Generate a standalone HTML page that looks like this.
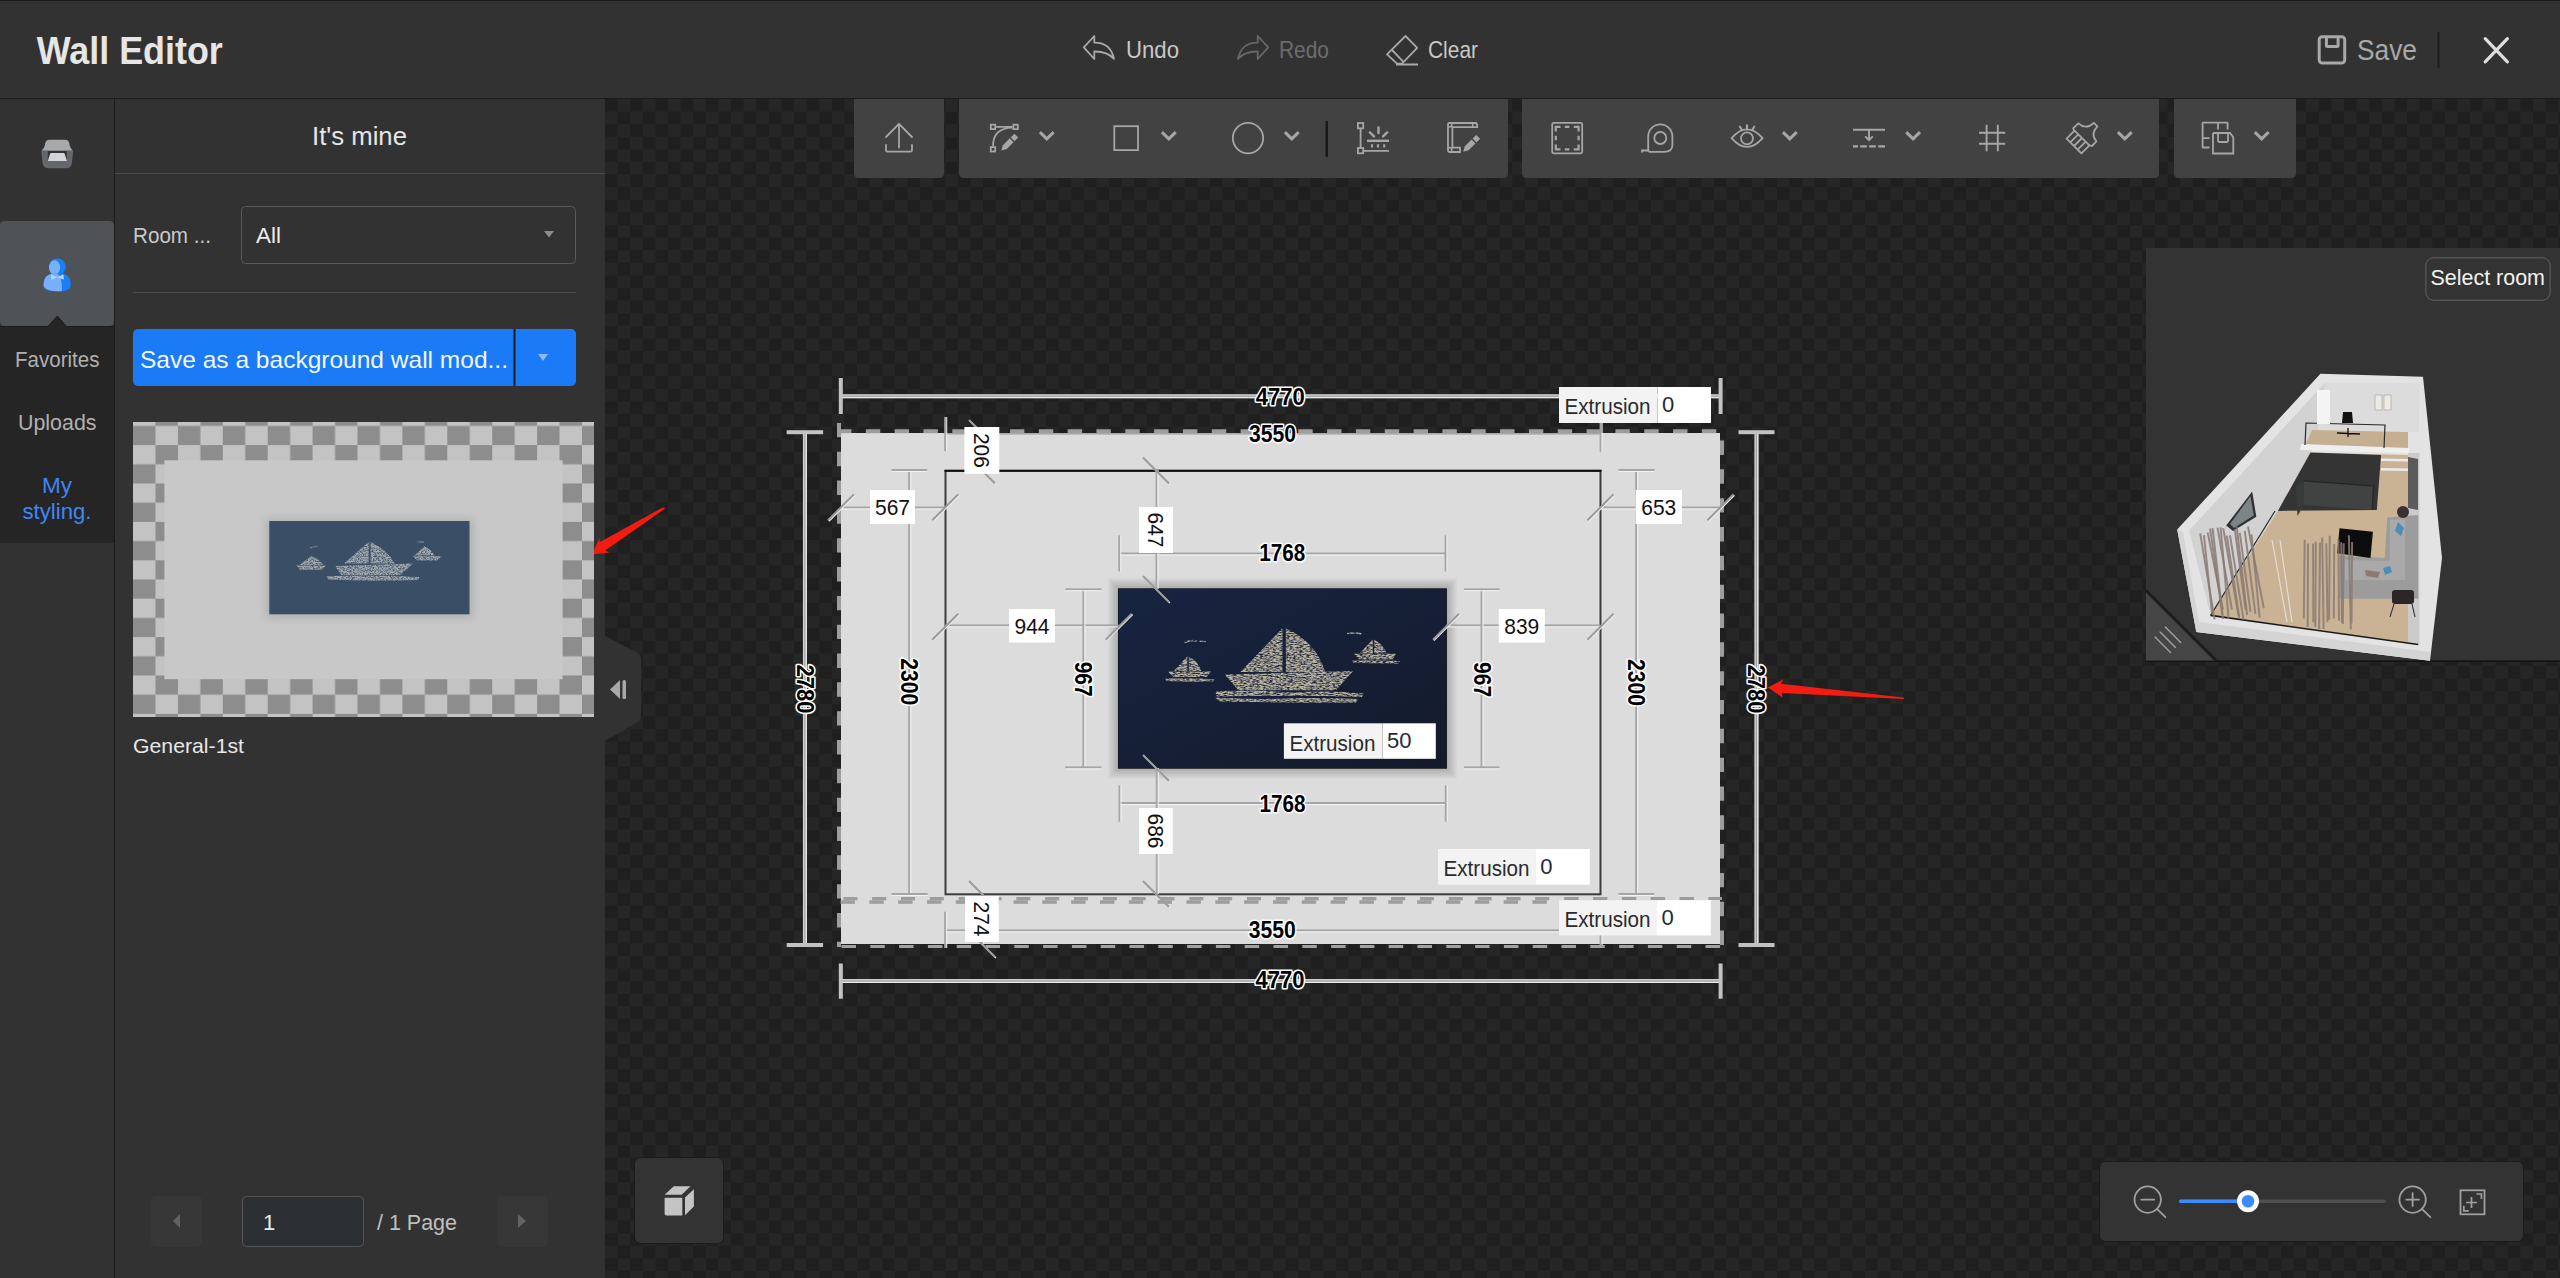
<!DOCTYPE html>
<html><head><meta charset="utf-8">
<style>
html,body{margin:0;padding:0;width:2560px;height:1278px;overflow:hidden;background:#323232;}
body{font-family:"Liberation Sans",sans-serif;position:relative;}
.abs{position:absolute;}
svg text{font-family:"Liberation Sans",sans-serif;}
</style></head>
<body>
<!-- canvas checker -->
<div class="abs" style="left:605px;top:99px;width:1955px;height:1179px;background-color:#1f1f1f;background-image:conic-gradient(#262626 0 25%,#1f1f1f 0 50%,#262626 0 75%,#1f1f1f 0);background-size:25.21px 25.21px;"></div>

<svg class="abs" style="left:0;top:0" width="2560" height="1278" viewBox="0 0 2560 1278">
<defs>
  <filter id="shadow" x="-20%" y="-30%" width="140%" height="160%">
    <feGaussianBlur stdDeviation="7"/>
  </filter>
  <filter id="shadow2" x="-20%" y="-30%" width="140%" height="160%">
    <feGaussianBlur stdDeviation="2.5"/>
  </filter>
  <filter id="chalk" filterUnits="userSpaceOnUse" x="1150" y="620" width="260" height="90">
    <feTurbulence type="fractalNoise" baseFrequency="0.3 1.1" numOctaves="2" seed="7" result="noise"/>
    <feColorMatrix in="noise" type="matrix" values="0 0 0 0 0  0 0 0 0 0  0 0 0 0 0  0 0 0 2.4 -0.55" result="mask"/>
    <feComposite in="SourceGraphic" in2="mask" operator="in" result="c"/>
    <feGaussianBlur in="c" stdDeviation="0.45"/>
  </filter>
  <linearGradient id="paint" x1="0" y1="0" x2="1" y2="1">
    <stop offset="0" stop-color="#172441"/>
    <stop offset="1" stop-color="#141a2b"/>
  </linearGradient>
</defs>

<!-- ===== HEADER ===== -->
<rect x="0" y="0" width="2560" height="98" fill="#323232"/>
<rect x="0" y="0" width="2560" height="1" fill="#191919"/>
<rect x="0" y="98" width="2560" height="1" fill="#1c1c1c"/>
<text x="36.8" y="64" font-size="38" font-weight="bold" fill="#e6e6e6" textLength="186" lengthAdjust="spacingAndGlyphs">Wall Editor</text>

<g id="hdr-actions">
  <text x="1126" y="58" font-size="24" fill="#c8c8c8" textLength="53" lengthAdjust="spacingAndGlyphs">Undo</text>
  <text x="1279" y="58" font-size="24" fill="#6c6c6c" textLength="50" lengthAdjust="spacingAndGlyphs">Redo</text>
  <text x="1428" y="58" font-size="24" fill="#c8c8c8" textLength="50" lengthAdjust="spacingAndGlyphs">Clear</text>
  <text x="2357" y="60" font-size="29" fill="#a8a8a8" textLength="60" lengthAdjust="spacingAndGlyphs">Save</text>
  <rect x="2437.5" y="32" width="2" height="36" fill="#1e1e1e"/>
</g>

<!-- ===== LEFT RAIL ===== -->
<rect x="114" y="99" width="1" height="1179" fill="#1c1c1c"/>
<rect x="0" y="327" width="114" height="216" fill="#252525"/>
<path d="M0 226 Q0 221 5 221 L109 221 Q114 221 114 226 L114 321 Q114 326 109 326 L66.5 326 L57.3 316 L48 326 L5 326 Q0 326 0 321 Z" fill="#4f5357"/>
<rect x="0" y="326" width="48" height="1" fill="#1c1c1c"/>
<rect x="66.5" y="326" width="47.5" height="1" fill="#1c1c1c"/>
<path d="M48 327 L57.3 316 L66.5 327 Z" fill="#252525"/>
<path d="M48 326.5 L57.3 316 L66.5 326.5" fill="none" stroke="#1c1c1c" stroke-width="1"/>

<text x="15" y="367" font-size="22" fill="#b0b0b0" textLength="84.5" lengthAdjust="spacingAndGlyphs">Favorites</text>
<text x="18" y="430" font-size="22" fill="#b0b0b0" textLength="78.5" lengthAdjust="spacingAndGlyphs">Uploads</text>
<text x="42" y="493" font-size="22" fill="#3f86f7" textLength="30" lengthAdjust="spacingAndGlyphs">My</text>
<text x="22.5" y="519" font-size="22" fill="#3f86f7" textLength="69" lengthAdjust="spacingAndGlyphs">styling.</text>

<!-- ===== PANEL ===== -->
<text x="312" y="145" font-size="26" fill="#e6e6e6" textLength="95" lengthAdjust="spacingAndGlyphs">It's mine</text>
<rect x="115" y="173" width="490" height="1" fill="#4a4a4a"/>
<text x="133" y="243" font-size="22" fill="#c8c8c8" textLength="78" lengthAdjust="spacingAndGlyphs">Room ...</text>
<rect x="241.5" y="206.5" width="334" height="57" rx="4" fill="none" stroke="#595959" stroke-width="1"/>
<text x="256" y="243" font-size="22" fill="#ececec" textLength="25" lengthAdjust="spacingAndGlyphs">All</text>
<path d="M544 231 L554 231 L549 237.5 Z" fill="#8c8c8c"/>
<rect x="133" y="292" width="443" height="1" fill="#4a4a4a"/>
<rect x="133" y="329" width="443" height="57" rx="5" fill="#1b7af6"/>
<rect x="513.5" y="329" width="2" height="57" fill="#1a1d22"/>
<text x="140" y="368" font-size="24" fill="#f2f6ff" textLength="368" lengthAdjust="spacingAndGlyphs">Save as a background wall mod...</text>
<path d="M538 354 L548 354 L543 361 Z" fill="#8fbaff"/>

<text x="133" y="753" font-size="21" fill="#e8e8e8" textLength="111" lengthAdjust="spacingAndGlyphs">General-1st</text>

<!-- pagination -->
<rect x="151" y="1196" width="51" height="51" rx="5" fill="#373737"/>
<path d="M180 1214 L180 1228 L173 1221 Z" fill="#626262"/>
<rect x="242.5" y="1196.5" width="121" height="50" rx="4" fill="#2c2f33" stroke="#575757" stroke-width="1"/>
<text x="263" y="1230" font-size="22" fill="#e8e8e8">1</text>
<text x="377" y="1230" font-size="22" fill="#c0c0c0" textLength="80" lengthAdjust="spacingAndGlyphs">/ 1 Page</text>
<rect x="497" y="1196" width="51" height="51" rx="5" fill="#373737"/>
<path d="M518 1214 L518 1228 L526 1221 Z" fill="#626262"/>

<!-- collapse tab -->
<path d="M605 636 L638 653 Q641 655 641 658 L641 717 Q641 720 638 722 L605 741 Z" fill="#323232"/>
<path d="M620 680 L620 699 L610 689.5 Z" fill="#a8a8a8"/>
<rect x="622.5" y="680" width="3.5" height="19" rx="1.5" fill="#a8a8a8"/>

<!-- ===== TOOLBAR GROUPS ===== -->
<path d="M854 99 L944 99 L944 173 Q944 178 939 178 L859 178 Q854 178 854 173 Z" fill="#424242"/>
<path d="M959 99 L1508 99 L1508 173 Q1508 178 1503 178 L964 178 Q959 178 959 173 Z" fill="#424242"/>
<path d="M1522 99 L2159 99 L2159 173 Q2159 178 2154 178 L1527 178 Q1522 178 1522 173 Z" fill="#424242"/>
<path d="M2174 99 L2296 99 L2296 173 Q2296 178 2291 178 L2179 178 Q2174 178 2174 173 Z" fill="#424242"/>
<rect x="1325.5" y="121" width="2.5" height="36" fill="#1a1a1a"/>

<!-- bottom-left 3D button -->
<rect x="634.5" y="1157.5" width="89" height="86" rx="6" fill="#333333" stroke="#1b1b1b" stroke-width="1"/>
<!-- zoom panel -->
<rect x="2099.5" y="1161.5" width="424" height="80" rx="6" fill="#333333" stroke="#1b1b1b" stroke-width="1"/>
<rect x="2179" y="1199.5" width="207" height="3.5" rx="1.7" fill="#4f4f4f"/>
<rect x="2179" y="1199.5" width="69" height="3.5" rx="1.7" fill="#3a8bff"/>
<circle cx="2248" cy="1201.3" r="11" fill="#ffffff"/>
<circle cx="2248" cy="1201.3" r="6.3" fill="#3a8bff"/>


<!-- drawing.svg -->
<rect x="841" y="433" width="879" height="511" fill="#dcdcdc"/>
<path d="M837 431.2 L1722 431.2" stroke-width="4" stroke="#9d9d9d" stroke-dasharray="14.4 14.43" fill="none"/>
<path d="M839 422.9 L839 947" stroke-width="4" stroke="#9d9d9d" stroke-dasharray="14.4 14.43" fill="none"/>
<path d="M1722 440.5 L1722 947" stroke-width="4" stroke="#9d9d9d" stroke-dasharray="14.4 14.43" fill="none"/>
<path d="M841.5 946.5 L1722 946.5" stroke-width="3" stroke="#a2a2a2" stroke-dasharray="14.5 14.3" fill="none"/>
<path d="M1564.2 898.5 L1722 898.5" stroke-width="3.2" stroke="#9d9d9d" stroke-dasharray="14.4 14.43" fill="none"/>
<rect x="1506.4" y="897" width="14.1" height="3.3" fill="#9d9d9d"/><rect x="1503.6" y="900.3" width="14.4" height="3.5" fill="#9d9d9d"/>
<rect x="1477.57" y="897" width="14.1" height="3.3" fill="#9d9d9d"/><rect x="1474.77" y="900.3" width="14.4" height="3.5" fill="#9d9d9d"/>
<rect x="1448.74" y="897" width="14.1" height="3.3" fill="#9d9d9d"/><rect x="1445.94" y="900.3" width="14.4" height="3.5" fill="#9d9d9d"/>
<rect x="1419.91" y="897" width="14.1" height="3.3" fill="#9d9d9d"/><rect x="1417.11" y="900.3" width="14.4" height="3.5" fill="#9d9d9d"/>
<rect x="1391.08" y="897" width="14.1" height="3.3" fill="#9d9d9d"/><rect x="1388.28" y="900.3" width="14.4" height="3.5" fill="#9d9d9d"/>
<rect x="1362.25" y="897" width="14.1" height="3.3" fill="#9d9d9d"/><rect x="1359.45" y="900.3" width="14.4" height="3.5" fill="#9d9d9d"/>
<rect x="1333.42" y="897" width="14.1" height="3.3" fill="#9d9d9d"/><rect x="1330.62" y="900.3" width="14.4" height="3.5" fill="#9d9d9d"/>
<rect x="1304.59" y="897" width="14.1" height="3.3" fill="#9d9d9d"/><rect x="1301.79" y="900.3" width="14.4" height="3.5" fill="#9d9d9d"/>
<rect x="1275.76" y="897" width="14.1" height="3.3" fill="#9d9d9d"/><rect x="1272.96" y="900.3" width="14.4" height="3.5" fill="#9d9d9d"/>
<rect x="1246.93" y="897" width="14.1" height="3.3" fill="#9d9d9d"/><rect x="1244.13" y="900.3" width="14.4" height="3.5" fill="#9d9d9d"/>
<rect x="1218.1" y="897" width="14.1" height="3.3" fill="#9d9d9d"/><rect x="1215.3" y="900.3" width="14.4" height="3.5" fill="#9d9d9d"/>
<rect x="1189.27" y="897" width="14.1" height="3.3" fill="#9d9d9d"/><rect x="1186.47" y="900.3" width="14.4" height="3.5" fill="#9d9d9d"/>
<rect x="1160.44" y="897" width="14.1" height="3.3" fill="#9d9d9d"/><rect x="1157.64" y="900.3" width="14.4" height="3.5" fill="#9d9d9d"/>
<rect x="1131.61" y="897" width="14.1" height="3.3" fill="#9d9d9d"/><rect x="1128.81" y="900.3" width="14.4" height="3.5" fill="#9d9d9d"/>
<rect x="1102.78" y="897" width="14.1" height="3.3" fill="#9d9d9d"/><rect x="1099.98" y="900.3" width="14.4" height="3.5" fill="#9d9d9d"/>
<rect x="1073.95" y="897" width="14.1" height="3.3" fill="#9d9d9d"/><rect x="1071.15" y="900.3" width="14.4" height="3.5" fill="#9d9d9d"/>
<rect x="1045.12" y="897" width="14.1" height="3.3" fill="#9d9d9d"/><rect x="1042.32" y="900.3" width="14.4" height="3.5" fill="#9d9d9d"/>
<rect x="1016.29" y="897" width="14.1" height="3.3" fill="#9d9d9d"/><rect x="1013.49" y="900.3" width="14.4" height="3.5" fill="#9d9d9d"/>
<rect x="987.46" y="897" width="14.1" height="3.3" fill="#9d9d9d"/><rect x="984.66" y="900.3" width="14.4" height="3.5" fill="#9d9d9d"/>
<rect x="958.63" y="897" width="14.1" height="3.3" fill="#9d9d9d"/><rect x="955.83" y="900.3" width="14.4" height="3.5" fill="#9d9d9d"/>
<rect x="929.8" y="897" width="14.1" height="3.3" fill="#9d9d9d"/><rect x="927" y="900.3" width="14.4" height="3.5" fill="#9d9d9d"/>
<rect x="900.97" y="897" width="14.1" height="3.3" fill="#9d9d9d"/><rect x="898.17" y="900.3" width="14.4" height="3.5" fill="#9d9d9d"/>
<rect x="872.14" y="897" width="14.1" height="3.3" fill="#9d9d9d"/><rect x="869.34" y="900.3" width="14.4" height="3.5" fill="#9d9d9d"/>
<rect x="843.31" y="897" width="14.1" height="3.3" fill="#9d9d9d"/><rect x="840.51" y="900.3" width="14.4" height="3.5" fill="#9d9d9d"/>
<rect x="1535.2" y="897" width="14.1" height="3.3" fill="#9d9d9d"/><rect x="1532.4" y="900.3" width="14.4" height="3.5" fill="#9d9d9d"/>
<rect x="945.5" y="470.8" width="655" height="423.5" fill="none" stroke="#3c3c3c" stroke-width="2"/>
<rect x="944.5" y="469.8" width="657" height="2" fill="#111"/>
<defs><linearGradient id="shT" x1="0" y1="1" x2="0" y2="0"><stop offset="0" stop-color="#a9a9a9"/><stop offset="1" stop-color="#dcdcdc"/></linearGradient><linearGradient id="shB" x1="0" y1="0" x2="0" y2="1"><stop offset="0" stop-color="#a9a9a9"/><stop offset="1" stop-color="#dcdcdc"/></linearGradient><linearGradient id="shL" x1="1" y1="0" x2="0" y2="0"><stop offset="0" stop-color="#a9a9a9"/><stop offset="1" stop-color="#dcdcdc"/></linearGradient><linearGradient id="shR" x1="0" y1="0" x2="1" y2="0"><stop offset="0" stop-color="#a9a9a9"/><stop offset="1" stop-color="#dcdcdc"/></linearGradient></defs>
<path d="M1107.2 577.5 L1457.7 577.5 L1446.2 589 L1118.7 589 Z" fill="url(#shT)"/>
<path d="M1107.2 779.5 L1457.7 779.5 L1446.2 768 L1118.7 768 Z" fill="url(#shB)"/>
<path d="M1107.2 577.5 L1118.7 589 L1118.7 768 L1107.2 779.5 Z" fill="url(#shL)"/>
<path d="M1457.7 577.5 L1446.2 589 L1446.2 768 L1457.7 779.5 Z" fill="url(#shR)"/>
<rect x="1118" y="588.3" width="328.9" height="180.4" fill="#0c0f16"/>
<rect x="1118.7" y="589" width="327.5" height="179" fill="url(#paint)"/>
<g fill="#bcb5a2" filter="url(#chalk)">
<path d="M1282.5 628.3 L1240.4 672 L1282.5 672 Z"/>
<path d="M1285.8 628.3 Q1316 642 1325.2 672 L1285.8 672 Z"/>
<path d="M1224.6 674.5 L1353.1 671 L1335.9 690.2 L1238.4 690.2 Z"/>
<path d="M1215 691.5 Q1250 689 1290 692.5 Q1330 690 1363.3 693.5 L1362 697 Q1300 695 1217 696.5 Z"/>
<path d="M1215 697.5 Q1260 700 1300 698 Q1340 697.5 1358 699 L1356 702.5 Q1290 703 1220 701.5 Z"/>
<path d="M1187.3 656.2 L1173.9 670.9 L1187.3 670.9 Z"/>
<path d="M1188.8 656.5 Q1198 661 1201.3 670.9 L1188.8 670.9 Z"/>
<path d="M1167.8 671.6 L1211 671.6 L1206.4 677 L1173.4 677 Z"/>
<path d="M1165.2 678.6 Q1190 677.8 1214.5 679.2 L1213 681.6 Q1190 682 1166 681 Z"/>
<path d="M1372.8 639.5 L1359.7 653.2 L1372.8 653.2 Z"/>
<path d="M1374.2 639.8 Q1383 644 1386.6 653.2 L1374.2 653.2 Z"/>
<path d="M1354.1 653.8 L1395.8 653.8 L1392.7 659.6 L1359.2 659.6 Z"/>
<path d="M1352.1 660.4 Q1376 659.8 1399.8 661 L1398.5 663.4 Q1376 663.6 1353 662.8 Z"/>
<path d="M1184.5 642.5 Q1192 639.5 1197 641 M1199.5 641.3 L1205.9 641.8" stroke="#bcb5a2" stroke-width="1.4" fill="none"/>
<path d="M1347 633.6 Q1354 632.4 1361.3 633.8" stroke="#bcb5a2" stroke-width="1.5" fill="none"/>
</g>
<rect x="840.8" y="394.2" width="879.8" height="4" fill="#cdcdcd"/>
<rect x="840.8" y="395.7" width="879.8" height="1" fill="#9c9c9c"/>
<rect x="840.8" y="397.2" width="879.8" height="1" fill="#ececec"/>
<rect x="838.8" y="378" width="4" height="36" fill="#c2c2c2"/>
<rect x="1718.6" y="378" width="4" height="36" fill="#c2c2c2"/>
<rect x="840.8" y="979" width="879.8" height="4" fill="#cdcdcd"/>
<rect x="840.8" y="980.5" width="879.8" height="1" fill="#9c9c9c"/>
<rect x="840.8" y="982" width="879.8" height="1" fill="#ececec"/>
<rect x="838.8" y="963.5" width="4" height="35.2" fill="#c2c2c2"/>
<rect x="1718.6" y="963.5" width="4" height="35.2" fill="#c2c2c2"/>
<rect x="802.9" y="432.2" width="4" height="512.8" fill="#cdcdcd"/>
<rect x="804.4" y="432.2" width="1" height="512.8" fill="#9c9c9c"/>
<rect x="805.9" y="432.2" width="1" height="512.8" fill="#ececec"/>
<rect x="786.7" y="430.2" width="36.4" height="4" fill="#c2c2c2"/>
<rect x="786.7" y="943" width="36.4" height="4" fill="#c2c2c2"/>
<rect x="1754.4" y="432.2" width="4" height="512.8" fill="#cdcdcd"/>
<rect x="1755.9" y="432.2" width="1" height="512.8" fill="#9c9c9c"/>
<rect x="1757.4" y="432.2" width="1" height="512.8" fill="#ececec"/>
<rect x="1738.5" y="430.2" width="36" height="4" fill="#c2c2c2"/>
<rect x="1738.5" y="943" width="36" height="4" fill="#c2c2c2"/>
<rect x="945" y="433" width="655.5" height="1.6" fill="#a8a8a8"/>
<rect x="944.2" y="417" width="2" height="34" fill="#a5a5a5"/>
<rect x="946.2" y="417" width="1" height="34" fill="#f2f2f2"/>
<rect x="1599.6" y="422.8" width="2" height="29" fill="#a5a5a5"/>
<rect x="1601.6" y="422.8" width="1" height="29" fill="#f2f2f2"/>
<rect x="945" y="929.4" width="655.5" height="2" fill="#a5a5a5"/>
<rect x="945" y="931.4" width="655.5" height="1" fill="#f2f2f2"/>
<rect x="944.2" y="911.7" width="2" height="36.3" fill="#a5a5a5"/>
<rect x="946.2" y="911.7" width="1" height="36.3" fill="#f2f2f2"/>
<rect x="1599.6" y="900" width="2" height="45" fill="#a5a5a5"/>
<rect x="1601.6" y="900" width="1" height="45" fill="#f2f2f2"/>
<rect x="908.2" y="470" width="2" height="424" fill="#a5a5a5"/>
<rect x="910.2" y="470" width="1" height="424" fill="#f2f2f2"/>
<rect x="891.5" y="469" width="35.7" height="2" fill="#a5a5a5"/>
<rect x="891.5" y="471" width="35.7" height="1" fill="#f2f2f2"/>
<rect x="891.5" y="893" width="36.2" height="2" fill="#a5a5a5"/>
<rect x="891.5" y="895" width="36.2" height="1" fill="#f2f2f2"/>
<rect x="1635.2" y="470" width="2" height="424" fill="#a5a5a5"/>
<rect x="1637.2" y="470" width="1" height="424" fill="#f2f2f2"/>
<rect x="1618.5" y="469" width="36.1" height="2" fill="#a5a5a5"/>
<rect x="1618.5" y="471" width="36.1" height="1" fill="#f2f2f2"/>
<rect x="1618.5" y="893" width="35.6" height="2" fill="#a5a5a5"/>
<rect x="1618.5" y="895" width="35.6" height="1" fill="#f2f2f2"/>
<rect x="841" y="506.5" width="104" height="2" fill="#a5a5a5"/>
<rect x="841" y="508.5" width="104" height="1" fill="#f2f2f2"/>
<path d="M828.9 521.2 L854.9 495.2" stroke="#f4f4f4" stroke-width="1.4"/>
<path d="M828 520.3 L854 494.3" stroke="#9a9a9a" stroke-width="2"/>
<path d="M933.2 521.2 L959.2 495.2" stroke="#f4f4f4" stroke-width="1.4"/>
<path d="M932.3 520.3 L958.3 494.3" stroke="#9a9a9a" stroke-width="2"/>
<rect x="1600.5" y="506.5" width="119.5" height="2" fill="#a5a5a5"/>
<rect x="1600.5" y="508.5" width="119.5" height="1" fill="#f2f2f2"/>
<path d="M1588.4 521.2 L1614.4 495.2" stroke="#f4f4f4" stroke-width="1.4"/>
<path d="M1587.5 520.3 L1613.5 494.3" stroke="#9a9a9a" stroke-width="2"/>
<path d="M1708.4 521.2 L1734.4 495.2" stroke="#f4f4f4" stroke-width="1.4"/>
<path d="M1707.5 520.3 L1733.5 494.3" stroke="#9a9a9a" stroke-width="2"/>
<rect x="945" y="624.4" width="173.7" height="2" fill="#a5a5a5"/>
<rect x="945" y="626.4" width="173.7" height="1" fill="#f2f2f2"/>
<path d="M933.2 640.6 L959.2 614.6" stroke="#f4f4f4" stroke-width="1.4"/>
<path d="M932.3 639.7 L958.3 613.7" stroke="#9a9a9a" stroke-width="2"/>
<path d="M1106.6 640.6 L1132.6 614.6" stroke="#f4f4f4" stroke-width="1.4"/>
<path d="M1105.7 639.7 L1131.7 613.7" stroke="#9a9a9a" stroke-width="2"/>
<rect x="1446.2" y="624.4" width="154.3" height="2" fill="#a5a5a5"/>
<rect x="1446.2" y="626.4" width="154.3" height="1" fill="#f2f2f2"/>
<path d="M1433.9 640.6 L1459.9 614.6" stroke="#f4f4f4" stroke-width="1.4"/>
<path d="M1433 639.7 L1459 613.7" stroke="#9a9a9a" stroke-width="2"/>
<path d="M1588.4 640.6 L1614.4 614.6" stroke="#f4f4f4" stroke-width="1.4"/>
<path d="M1587.5 639.7 L1613.5 613.7" stroke="#9a9a9a" stroke-width="2"/>
<rect x="1082.4" y="589.3" width="2" height="178.1" fill="#a5a5a5"/>
<rect x="1084.4" y="589.3" width="1" height="178.1" fill="#f2f2f2"/>
<rect x="1065.4" y="588.3" width="36.1" height="2" fill="#a5a5a5"/>
<rect x="1065.4" y="590.3" width="36.1" height="1" fill="#f2f2f2"/>
<rect x="1065.4" y="766.4" width="36.1" height="2" fill="#a5a5a5"/>
<rect x="1065.4" y="768.4" width="36.1" height="1" fill="#f2f2f2"/>
<rect x="1480.6" y="589.3" width="2" height="178.1" fill="#a5a5a5"/>
<rect x="1482.6" y="589.3" width="1" height="178.1" fill="#f2f2f2"/>
<rect x="1463.9" y="588.3" width="35.6" height="2" fill="#a5a5a5"/>
<rect x="1463.9" y="590.3" width="35.6" height="1" fill="#f2f2f2"/>
<rect x="1463.9" y="766.4" width="35.6" height="2" fill="#a5a5a5"/>
<rect x="1463.9" y="768.4" width="35.6" height="1" fill="#f2f2f2"/>
<rect x="1119.3" y="552.5" width="326.3" height="2" fill="#a5a5a5"/>
<rect x="1119.3" y="554.5" width="326.3" height="1" fill="#f2f2f2"/>
<rect x="1118.3" y="535.3" width="2" height="36.2" fill="#a5a5a5"/>
<rect x="1120.3" y="535.3" width="1" height="36.2" fill="#f2f2f2"/>
<rect x="1444.6" y="535.3" width="2" height="36.2" fill="#a5a5a5"/>
<rect x="1446.6" y="535.3" width="1" height="36.2" fill="#f2f2f2"/>
<rect x="1119.3" y="802" width="326.5" height="2" fill="#a5a5a5"/>
<rect x="1119.3" y="804" width="326.5" height="1" fill="#f2f2f2"/>
<rect x="1118.5" y="785.4" width="2" height="36.2" fill="#a5a5a5"/>
<rect x="1120.5" y="785.4" width="1" height="36.2" fill="#f2f2f2"/>
<rect x="1444.8" y="785.4" width="2" height="36.2" fill="#a5a5a5"/>
<rect x="1446.8" y="785.4" width="1" height="36.2" fill="#f2f2f2"/>
<rect x="981" y="433" width="2" height="37" fill="#a5a5a5"/>
<rect x="983" y="433" width="1" height="37" fill="#f2f2f2"/>
<path d="M969.9 420.9 L995.9 446.9" stroke="#f4f4f4" stroke-width="1.4"/>
<path d="M969 420 L995 446" stroke="#9a9a9a" stroke-width="2"/>
<path d="M969.9 458.4 L995.9 484.4" stroke="#f4f4f4" stroke-width="1.4"/>
<path d="M969 457.5 L995 483.5" stroke="#9a9a9a" stroke-width="2"/>
<rect x="981" y="894" width="2" height="51" fill="#a5a5a5"/>
<rect x="983" y="894" width="1" height="51" fill="#f2f2f2"/>
<path d="M969.9 881.9 L995.9 907.9" stroke="#f4f4f4" stroke-width="1.4"/>
<path d="M969 881 L995 907" stroke="#9a9a9a" stroke-width="2"/>
<path d="M969.9 931.9 L995.9 957.9" stroke="#f4f4f4" stroke-width="1.4"/>
<path d="M969 931 L995 957" stroke="#9a9a9a" stroke-width="2"/>
<rect x="1155.5" y="470" width="2" height="119" fill="#a5a5a5"/>
<rect x="1157.5" y="470" width="1" height="119" fill="#f2f2f2"/>
<path d="M1143.9 458.4 L1169.9 484.4" stroke="#f4f4f4" stroke-width="1.4"/>
<path d="M1143 457.5 L1169 483.5" stroke="#9a9a9a" stroke-width="2"/>
<path d="M1143.9 576.9 L1169.9 602.9" stroke="#f4f4f4" stroke-width="1.4"/>
<path d="M1143 576 L1169 602" stroke="#9a9a9a" stroke-width="2"/>
<rect x="1155.8" y="768" width="2" height="126" fill="#a5a5a5"/>
<rect x="1157.8" y="768" width="1" height="126" fill="#f2f2f2"/>
<path d="M1143.9 755.9 L1169.9 781.9" stroke="#f4f4f4" stroke-width="1.4"/>
<path d="M1143 755 L1169 781" stroke="#9a9a9a" stroke-width="2"/>
<path d="M1143.9 881.9 L1169.9 907.9" stroke="#f4f4f4" stroke-width="1.4"/>
<path d="M1143 881 L1169 907" stroke="#9a9a9a" stroke-width="2"/>
<rect x="870" y="490" width="45" height="34" fill="#ffffff"/>
<text x="892.5" y="515" font-size="22" fill="#111" text-anchor="middle" textLength="35" lengthAdjust="spacingAndGlyphs">567</text>
<rect x="1635.6" y="490" width="46.4" height="34" fill="#ffffff"/>
<text x="1658.8" y="515" font-size="22" fill="#111" text-anchor="middle" textLength="35" lengthAdjust="spacingAndGlyphs">653</text>
<rect x="1009" y="609" width="46" height="33.6" fill="#ffffff"/>
<text x="1032" y="633.8" font-size="22" fill="#111" text-anchor="middle" textLength="35" lengthAdjust="spacingAndGlyphs">944</text>
<rect x="1498.8" y="609" width="46" height="33.6" fill="#ffffff"/>
<text x="1521.8" y="633.8" font-size="22" fill="#111" text-anchor="middle" textLength="35" lengthAdjust="spacingAndGlyphs">839</text>
<rect x="964.4" y="427" width="34.9" height="46.8" fill="#ffffff"/>
<text transform="translate(981.85 450.4) rotate(90)" x="0" y="8" font-size="22" fill="#111" text-anchor="middle" textLength="35" lengthAdjust="spacingAndGlyphs">206</text>
<rect x="1139" y="507" width="34" height="46" fill="#ffffff"/>
<text transform="translate(1156 530) rotate(90)" x="0" y="8" font-size="22" fill="#111" text-anchor="middle" textLength="35" lengthAdjust="spacingAndGlyphs">647</text>
<rect x="1139" y="808" width="33.8" height="46" fill="#ffffff"/>
<text transform="translate(1155.9 831) rotate(90)" x="0" y="8" font-size="22" fill="#111" text-anchor="middle" textLength="35" lengthAdjust="spacingAndGlyphs">686</text>
<rect x="965" y="896" width="33.8" height="46" fill="#ffffff"/>
<text transform="translate(981.9 919) rotate(90)" x="0" y="8" font-size="22" fill="#111" text-anchor="middle" textLength="35" lengthAdjust="spacingAndGlyphs">274</text>
<text x="1280.3" y="404.7" font-size="23" font-weight="bold" fill="#000" stroke="#ffffff" stroke-width="3.2" stroke-linejoin="round" paint-order="stroke" text-anchor="middle" textLength="49" lengthAdjust="spacingAndGlyphs">4770</text>
<text x="1272.5" y="441.7" font-size="23" font-weight="bold" fill="#000" stroke="#ffffff" stroke-width="3.2" stroke-linejoin="round" paint-order="stroke" text-anchor="middle" textLength="47" lengthAdjust="spacingAndGlyphs">3550</text>
<text x="1282.2" y="561.2" font-size="23" font-weight="bold" fill="#000" stroke="#ffffff" stroke-width="3.2" stroke-linejoin="round" paint-order="stroke" text-anchor="middle" textLength="46" lengthAdjust="spacingAndGlyphs">1768</text>
<text x="1282.5" y="811.7" font-size="23" font-weight="bold" fill="#000" stroke="#ffffff" stroke-width="3.2" stroke-linejoin="round" paint-order="stroke" text-anchor="middle" textLength="46" lengthAdjust="spacingAndGlyphs">1768</text>
<text x="1272.2" y="938.2" font-size="23" font-weight="bold" fill="#000" stroke="#ffffff" stroke-width="3.2" stroke-linejoin="round" paint-order="stroke" text-anchor="middle" textLength="47" lengthAdjust="spacingAndGlyphs">3550</text>
<text x="1280" y="987.9" font-size="23" font-weight="bold" fill="#000" stroke="#ffffff" stroke-width="3.2" stroke-linejoin="round" paint-order="stroke" text-anchor="middle" textLength="49" lengthAdjust="spacingAndGlyphs">4770</text>
<text transform="translate(805 689) rotate(90)" x="0" y="8.2" font-size="23" font-weight="bold" fill="#000" stroke="#ffffff" stroke-width="3.2" stroke-linejoin="round" paint-order="stroke" text-anchor="middle" textLength="49" lengthAdjust="spacingAndGlyphs">2780</text>
<text transform="translate(909.5 681.8) rotate(90)" x="0" y="8.2" font-size="23" font-weight="bold" fill="#000" stroke="#ffffff" stroke-width="3.2" stroke-linejoin="round" paint-order="stroke" text-anchor="middle" textLength="47" lengthAdjust="spacingAndGlyphs">2300</text>
<text transform="translate(1083.4 679.2) rotate(90)" x="0" y="8.2" font-size="23" font-weight="bold" fill="#000" stroke="#ffffff" stroke-width="3.2" stroke-linejoin="round" paint-order="stroke" text-anchor="middle" textLength="35" lengthAdjust="spacingAndGlyphs">967</text>
<text transform="translate(1481.8 679.6) rotate(90)" x="0" y="8.2" font-size="23" font-weight="bold" fill="#000" stroke="#ffffff" stroke-width="3.2" stroke-linejoin="round" paint-order="stroke" text-anchor="middle" textLength="35" lengthAdjust="spacingAndGlyphs">967</text>
<text transform="translate(1636.2 682.6) rotate(90)" x="0" y="8.2" font-size="23" font-weight="bold" fill="#000" stroke="#ffffff" stroke-width="3.2" stroke-linejoin="round" paint-order="stroke" text-anchor="middle" textLength="47" lengthAdjust="spacingAndGlyphs">2300</text>
<text transform="translate(1756.5 689) rotate(90)" x="0" y="8.2" font-size="23" font-weight="bold" fill="#000" stroke="#ffffff" stroke-width="3.2" stroke-linejoin="round" paint-order="stroke" text-anchor="middle" textLength="49" lengthAdjust="spacingAndGlyphs">2780</text>
<rect x="1559" y="387" width="98.6" height="36" fill="#f3f3f3"/>
<rect x="1657.6" y="387" width="53.4" height="36" fill="#ffffff"/>
<text x="1564.5" y="414.2" font-size="22" fill="#2b2b2b" textLength="86" lengthAdjust="spacingAndGlyphs">Extrusion</text>
<text x="1662.1" y="411.6" font-size="22" fill="#1e2a3a">0</text>
<rect x="1283.9" y="723.3" width="98.6" height="35.5" fill="#f3f3f3"/>
<rect x="1382.5" y="723.3" width="53.3" height="35.5" fill="#ffffff"/>
<text x="1289.4" y="750.5" font-size="22" fill="#2b2b2b" textLength="86" lengthAdjust="spacingAndGlyphs">Extrusion</text>
<text x="1387" y="747.9" font-size="22" fill="#1e2a3a">50</text>
<rect x="1438" y="849" width="97.8" height="35.6" fill="#f3f3f3"/>
<rect x="1535.8" y="849" width="54" height="35.6" fill="#ffffff"/>
<text x="1443.5" y="876.2" font-size="22" fill="#2b2b2b" textLength="86" lengthAdjust="spacingAndGlyphs">Extrusion</text>
<text x="1540.3" y="873.6" font-size="22" fill="#1e2a3a">0</text>
<rect x="1559" y="900.2" width="98" height="35.2" fill="#f3f3f3"/>
<rect x="1657" y="900.2" width="53.8" height="35.2" fill="#ffffff"/>
<text x="1564.5" y="927.4" font-size="22" fill="#2b2b2b" textLength="86" lengthAdjust="spacingAndGlyphs">Extrusion</text>
<text x="1661.5" y="924.8" font-size="22" fill="#1e2a3a">0</text>
<path d="M591.8 554.5 L599.6 538 L599.6 542.3 L662.8 507.4 Q665.2 507.2 664.6 509 L605.2 550.5 L609.2 552.6 Z" fill="#f21c12"/>
<path d="M1767.8 687.5 L1783.4 679.4 L1780.9 683.75 L1903.5 697.4 Q1904.8 698.2 1903.5 699.1 L1781.6 693.1 L1782.5 697.5 Z" fill="#f21c12"/>
<!-- icons.svg -->
<path d="M1083.8 47.3 L1094.3 36 L1094.3 42.6 Q1110.5 42.3 1114 58.8 Q1107 51.2 1094.3 51.5 L1094.3 59 Z" fill="none" stroke="#a9a9a9" stroke-width="1.8" stroke-linejoin="round"/>
<g transform="translate(2352 0) scale(-1 1)"><path d="M1083.8 47.3 L1094.3 36 L1094.3 42.6 Q1110.5 42.3 1114 58.8 Q1107 51.2 1094.3 51.5 L1094.3 59 Z" fill="none" stroke="#676767" stroke-width="1.8" stroke-linejoin="round"/></g>
<path d="M1405.5 36 L1417.2 47.8 L1402 63.6 L1397 63.6 L1387 54.4 Z" fill="none" stroke="#a9a9a9" stroke-width="1.8" stroke-linejoin="round"/>
<path d="M1392 50 L1403.2 61.6 M1396 64.5 L1418 64.5" stroke="#a9a9a9" stroke-width="1.8"/>
<rect x="2319.2" y="36.7" width="25.5" height="26.4" rx="3" fill="none" stroke="#a8a8a8" stroke-width="3"/>
<path d="M2326.4 36.5 L2326.4 45.6 Q2326.4 46.6 2327.4 46.6 L2337.1 46.6 Q2338.1 46.6 2338.1 45.6 L2338.1 36.5" fill="none" stroke="#a8a8a8" stroke-width="3"/>
<path d="M2485.2 38.6 L2507.4 61.8 M2507.4 38.6 L2485.2 61.8" stroke="#dedede" stroke-width="3.2" stroke-linecap="round"/>
<path d="M49.5 139.7 L65 139.7 Q68.7 139.7 69.4 143.5 L69.8 145.8 Q70.3 148.3 72.9 150.8 L41.6 150.8 Q44.2 148.3 44.7 145.8 L45.1 143.5 Q45.8 139.7 49.5 139.7 Z" fill="#a7a8aa"/>
<path d="M41.6 150.8 Q41.2 151.5 41.5 153 L42.5 162.5 Q43 168.2 48 168.2 L66.5 168.2 Q71.5 168.2 72 162.5 L73 153 Q73.3 151.5 72.9 150.8 L67.2 150.8 Q66.8 151 66.8 152 L66.8 161 L47.8 161 L47.8 152 Q47.8 151 47.3 150.8 Z" fill="#64676c"/>
<path d="M51.2 153 L63.6 153 Q64.3 153 64.6 153.6 L67 161 L47.8 161 L50.2 153.6 Q50.5 153 51.2 153 Z" fill="#d4d5d7"/>
<circle cx="57.3" cy="266.8" r="8.4" fill="#1a7ffb"/>
<ellipse cx="54.6" cy="267.6" rx="5.6" ry="7.3" fill="#78b0ff"/>
<path d="M43.6 285 Q43.6 273.5 55 273.4 L60 273.4 Q70.8 273.5 70.8 285 Q70.8 291.4 57.2 291.4 Q43.6 291.4 43.6 285 Z" fill="#1a7ffb"/>
<path d="M43.6 285 Q43.6 273.5 55 273.4 L57 273.4 Q62.5 276 62 291.3 Q43.6 291.4 43.6 285 Z" fill="#78b0ff"/>
<path d="M51.2 274.5 L57.3 277.5 L63.5 274.2 L63.8 279.5 L57.3 277.6 L51 279.8 Z" fill="#b8d6ff"/>
<path d="M899 124.5 L899 147.5 M886 137 L899 123.8 L912 137" fill="none" stroke="#a6a6a6" stroke-width="1.8" stroke-linejoin="round" stroke-linecap="round"/>
<path d="M886 145 L886 150 Q886 151.6 887.6 151.6 L910.4 151.6 Q912 151.6 912 150 L912 145" fill="none" stroke="#a6a6a6" stroke-width="1.8" stroke-linejoin="round" stroke-linecap="round"/>
<rect x="990.8" y="124.7" width="4.4" height="4.4" fill="none" stroke="#a6a6a6" stroke-width="1.8" stroke-linejoin="miter" stroke-linecap="butt"/>
<rect x="1013.4" y="124.7" width="4.4" height="4.4" fill="none" stroke="#a6a6a6" stroke-width="1.8" stroke-linejoin="miter" stroke-linecap="butt"/>
<rect x="990.8" y="147.1" width="4.4" height="4.4" fill="none" stroke="#a6a6a6" stroke-width="1.8" stroke-linejoin="miter" stroke-linecap="butt"/>
<path d="M996.1 126.9 L1012.5 126.9 M993 146.2 Q993 128 1012.5 127.6" fill="none" stroke="#a6a6a6" stroke-width="1.8" stroke-linejoin="miter" stroke-linecap="butt"/>
<g transform="translate(1001.3 150.6) rotate(-45)" fill="#a6a6a6"><path d="M0 0 L5 -2.7 L14.6 -2.7 L14.6 2.7 L5 2.7 Z"/><rect x="16" y="-2.7" width="5.2" height="5.4"/></g>
<path d="M1039.9 132.20000000000002 L1046.8 138.9 L1053.7 132.20000000000002" fill="none" stroke="#a6a6a6" stroke-width="3"/>
<rect x="1114.3" y="126.2" width="23.7" height="23.9" fill="none" stroke="#a6a6a6" stroke-width="1.8" stroke-linejoin="miter" stroke-linecap="butt"/>
<path d="M1161.9 132.20000000000002 L1168.8 138.9 L1175.7 132.20000000000002" fill="none" stroke="#a6a6a6" stroke-width="3"/>
<circle cx="1248" cy="138.1" r="15.2" fill="none" stroke="#a6a6a6" stroke-width="1.8" stroke-linejoin="miter" stroke-linecap="butt"/>
<path d="M1284.9 132.20000000000002 L1291.8 138.9 L1298.7 132.20000000000002" fill="none" stroke="#a6a6a6" stroke-width="3"/>
<rect x="1357.9" y="123" width="5.3" height="5.3" fill="none" stroke="#a6a6a6" stroke-width="1.8" stroke-linejoin="miter" stroke-linecap="butt"/>
<rect x="1357.9" y="148" width="5.3" height="5.3" fill="none" stroke="#a6a6a6" stroke-width="1.8" stroke-linejoin="miter" stroke-linecap="butt"/>
<path d="M1360.6 128.3 L1360.6 148 M1363.2 150.8 L1389 150.8" fill="none" stroke="#a6a6a6" stroke-width="1.8" stroke-linejoin="miter" stroke-linecap="butt"/>
<path d="M1367 140.8 L1389 140.8" fill="none" stroke="#a6a6a6" stroke-width="2.4"/>
<path d="M1372 144.2 L1372 147.6 M1378 144.2 L1378 147.6 M1384.2 144.2 L1384.2 147.6" fill="none" stroke="#a6a6a6" stroke-width="2.1"/>
<path d="M1378.5 127.5 L1378.5 133 M1369.8 132.4 L1374 136.4 M1387.2 132.4 L1383 136.4" fill="none" stroke="#a6a6a6" stroke-width="2.4" stroke-linecap="round"/>
<path d="M1449.3 123 L1476 123 L1477.2 124.6 L1477.2 127.2 L1452.4 127.2 L1452.4 147.7 L1460 147.7 L1460 152 L1449.3 152 Q1448 152 1448 150.6 L1448 124.4 Q1448 123 1449.3 123 Z" fill="none" stroke="#a6a6a6" stroke-width="1.8" stroke-linejoin="miter" stroke-linecap="butt"/>
<path d="M1451.7 123 L1451.7 127.2 M1448 126.8 L1452.4 126.8 M1472.7 123 L1472.7 127.2 M1448 147.7 L1452.4 147.7 M1451.7 147.7 L1451.7 152" fill="none" stroke="#a6a6a6" stroke-width="1.6"/>
<g transform="translate(1463.2 151.8) rotate(-45)" fill="#a6a6a6"><path d="M0 0 L5 -2.7 L14.6 -2.7 L14.6 2.7 L5 2.7 Z"/><rect x="16" y="-2.7" width="5.2" height="5.4"/></g>
<rect x="1552.2" y="122.9" width="30" height="30.4" rx="1.5" fill="none" stroke="#a6a6a6" stroke-width="1.8" stroke-linejoin="miter" stroke-linecap="butt"/>
<path d="M1555.8 131.5 L1555.8 126.8 L1560.6 126.8 M1573.8 126.8 L1578.6 126.8 L1578.6 131.5 M1578.6 144.5 L1578.6 149.3 L1573.8 149.3 M1560.6 149.3 L1555.8 149.3 L1555.8 144.5 M1564.8 126.8 L1569.4 126.8 M1564.8 149.3 L1569.4 149.3 M1555.8 135.8 L1555.8 140.2 M1578.6 135.8 L1578.6 140.2" fill="none" stroke="#a6a6a6" stroke-width="2.2"/>
<path d="M1648.2 150.3 L1648.2 136.5 A12.1 12.1 0 0 1 1672.4 136.5 L1672.4 145 Q1672.4 151.8 1664 151.8 L1650 151.8 Q1648.2 151.8 1648.2 150.3 M1648.2 150.5 L1642 150.5 L1642 152.6" fill="none" stroke="#a6a6a6" stroke-width="1.8" stroke-linejoin="miter" stroke-linecap="butt"/>
<circle cx="1660.3" cy="138" r="6" fill="none" stroke="#a6a6a6" stroke-width="1.8" stroke-linejoin="miter" stroke-linecap="butt"/>
<path d="M1731.6 138.1 Q1747 120.5 1762.6 138.1 Q1747 155.8 1731.6 138.1 Z" fill="none" stroke="#a6a6a6" stroke-width="1.8" stroke-linejoin="miter" stroke-linecap="butt"/>
<circle cx="1747" cy="138.3" r="6" fill="none" stroke="#a6a6a6" stroke-width="1.8" stroke-linejoin="miter" stroke-linecap="butt"/>
<path d="M1747 125.3 L1747 129.5 M1739.8 126.6 L1741.6 129.6 M1754.3 126.6 L1752.6 129.6" fill="none" stroke="#a6a6a6" stroke-width="2" stroke-linecap="round"/>
<path d="M1782.9 132.20000000000002 L1789.8 138.9 L1796.7 132.20000000000002" fill="none" stroke="#a6a6a6" stroke-width="3"/>
<path d="M1853 129.8 L1885 129.8 M1869 130 L1869 140 M1865.2 136.4 L1869 140.2 L1872.8 136.4" fill="none" stroke="#a6a6a6" stroke-width="1.9"/>
<path d="M1853 146.3 L1858 146.3 M1860.2 146.3 L1866.8 146.3 M1869.2 146.3 L1875.8 146.3 M1878.2 146.3 L1885 146.3" fill="none" stroke="#a6a6a6" stroke-width="2.3"/>
<path d="M1906.2 132.20000000000002 L1913.1 138.9 L1920.0 132.20000000000002" fill="none" stroke="#a6a6a6" stroke-width="3"/>
<path d="M1986.6 124.8 L1986.6 151.2 M1997.8 124.8 L1997.8 151.2 M1979 132.8 L2005.2 132.8 M1979 143.8 L2005.2 143.8" fill="none" stroke="#a6a6a6" stroke-width="1.9"/>
<path d="M2066.6 138.7 L2074.5 130.7 L2089.4 145.3 L2081.4 153.3 Z" fill="none" stroke="#a6a6a6" stroke-width="1.8" stroke-linejoin="round" stroke-linecap="round"/>
<path d="M2070.3 142.4 L2078.2 134.4 M2074 146 L2082 138 M2077.7 149.6 L2085.7 141.6" fill="none" stroke="#a6a6a6" stroke-width="1.8"/>
<path d="M2074.5 130.7 L2073.1 128.4 L2078.4 123.3 Q2086 130.3 2093.8 122.8 L2097.4 126.4 Q2090 134 2096.4 141.4 L2091.9 146 L2089.4 145.3" fill="none" stroke="#a6a6a6" stroke-width="1.8" stroke-linejoin="round" stroke-linecap="round"/>
<path d="M2117.9 132.20000000000002 L2124.8 138.9 L2131.7 132.20000000000002" fill="none" stroke="#a6a6a6" stroke-width="3"/>
<path d="M2209.6 147.5 L2202.8 147.5 Q2202.6 147.5 2202.6 147 L2202.6 123 Q2202.6 122.6 2203.2 122.6 L2227 122.6 Q2227.6 122.6 2227.6 123.2 L2227.6 129.4 M2218 122.6 L2218 129.4 M2202.6 138.2 L2209.6 138.2" fill="none" stroke="#a6a6a6" stroke-width="1.8" stroke-linejoin="miter" stroke-linecap="butt"/>
<path d="M2213.6 133 L2230 133 L2233.3 137.2 L2233.3 153.5 L2213 153.5 L2213 133.6 Z M2218 133 L2218 140.8 Q2218 142 2219.2 142 L2226.8 142 Q2228 142 2228 140.8 L2228 133" fill="none" stroke="#a6a6a6" stroke-width="1.8" stroke-linejoin="miter" stroke-linecap="butt"/>
<path d="M2254.8 132.20000000000002 L2261.7000000000003 138.9 L2268.6 132.20000000000002" fill="none" stroke="#a6a6a6" stroke-width="3"/>
<path d="M664.6 1197.8 L682.3 1197.8 L682.3 1215.6 L666.6 1215.6 Q664.6 1215.6 664.6 1213.6 Z" fill="#c4c4c4"/>
<path d="M664.6 1194.7 L673.8 1186.2 L690.6 1186.2 L681.6 1194.7 Z" fill="#c4c4c4"/>
<path d="M685 1197.6 L693.9 1189.2 L693.9 1206.6 L685 1215.2 Z" fill="#c4c4c4"/>
<circle cx="2147.7" cy="1199.6" r="13.2" fill="none" stroke="#a0a0a0" stroke-width="1.8" stroke-linecap="round"/>
<path d="M2141.3 1199.6 L2154.2 1199.6 M2157.2 1209.2 L2165.4 1217.2" fill="none" stroke="#a0a0a0" stroke-width="1.8" stroke-linecap="round"/>
<circle cx="2412.6" cy="1199.6" r="13.2" fill="none" stroke="#a0a0a0" stroke-width="1.8" stroke-linecap="round"/>
<path d="M2406.2 1199.6 L2419 1199.6 M2412.6 1193.2 L2412.6 1206 M2422.1 1209.2 L2430.4 1217.2" fill="none" stroke="#a0a0a0" stroke-width="1.8" stroke-linecap="round"/>
<rect x="2460.5" y="1190.3" width="24" height="24" fill="none" stroke="#a0a0a0" stroke-width="1.8"/>
<path d="M2466 1202.5 L2477 1202.5 M2471.5 1197 L2471.5 1208 M2476.5 1194 L2481.4 1194 L2481.4 1198.9 M2463.8 1205.8 L2463.8 1210.9 L2468.8 1210.9" fill="none" stroke="#a0a0a0" stroke-width="1.7"/>
<!-- preview.svg -->
<defs><pattern id="thchk" patternUnits="userSpaceOnUse" x="133" y="406.7" width="44.9" height="38.4"><rect width="44.9" height="38.4" fill="#c3c3c3"/><rect x="22.45" y="0" width="22.45" height="19.2" fill="#8d8d8d"/><rect x="0" y="19.2" width="22.45" height="19.2" fill="#8d8d8d"/></pattern><filter id="thblur" x="-5%" y="-5%" width="110%" height="110%"><feGaussianBlur stdDeviation="0.7"/></filter><filter id="thsh" x="-20%" y="-30%" width="140%" height="160%"><feGaussianBlur stdDeviation="4"/></filter><filter id="thchalk" filterUnits="userSpaceOnUse" x="285" y="535" width="165" height="52"><feTurbulence type="fractalNoise" baseFrequency="0.6 1.2" numOctaves="2" seed="3" result="n"/><feColorMatrix in="n" type="matrix" values="0 0 0 0 0  0 0 0 0 0  0 0 0 0 0  0 0 0 2.4 -0.5" result="m"/><feComposite in="SourceGraphic" in2="m" operator="in" result="c"/><feGaussianBlur in="c" stdDeviation="0.6"/></filter><clipPath id="thclip"><rect x="133" y="422" width="461" height="295"/></clipPath></defs>
<g clip-path="url(#thclip)">
<rect x="133" y="422" width="461" height="295" fill="url(#thchk)" filter="url(#thblur)"/>
<rect x="164.4" y="460.3" width="398.2" height="218.9" fill="#c8c8c8" filter="url(#thblur)"/>
<rect x="266" y="519" width="207" height="99" fill="#000" opacity="0.12" filter="url(#thsh)"/>
<rect x="269.3" y="521" width="200.2" height="93.3" fill="#3a4e65"/>
<g fill="#a3abb0" filter="url(#thchalk)">
<path d="M369.4 541.3 L343.9 563.5 L368.4 563.5 Z M370.6 542 Q388 550 394.8 563.5 L370.6 563.5 Z"/>
<path d="M334.8 566 L412.9 563.5 L400.6 575 L341.4 575 Z M326.6 576.2 Q370 574.5 419.5 577 L418 580 Q370 581.5 328 579.5 Z"/>
<path d="M311 556 Q318 558 323.3 565 L299.5 565 Z M296.2 565.6 L325.8 565.6 L322 569.8 L300 569.8 Z"/>
<path d="M424.4 546.2 Q431 549 434.5 555.5 L414.5 555.5 Z M412.9 556.2 L441.7 556.2 L437 560.4 L417 560.4 Z"/>
<path d="M310 548 L318 546 M417 542 L424 542" stroke="#97a0a5" stroke-width="1" fill="none"/>
</g>
</g>
<rect x="2146" y="248" width="414" height="413" fill="#333333"/>
<rect x="2146" y="660.4" width="414" height="1.6" fill="#121212"/>
<rect x="2425.9" y="257.8" width="124.2" height="42.4" rx="7.5" fill="#333333" stroke="#636363" stroke-width="1"/>
<text x="2430.5" y="284.8" font-size="22" fill="#f2f2f2" textLength="114.5" lengthAdjust="spacingAndGlyphs">Select room</text>
<path d="M2320.4 373.8 L2423.0 376.7 L2442.0 558.0 L2430.0 660.7 L2196.3 632.0 L2177.2 529.5 Z" fill="#e3e3e3" />
<path d="M2177.2 529.5 L2196.3 632.0 L2430.0 660.7 L2430.0 652.0 L2199.0 622.0 L2183.0 532.0 Z" fill="#d4d4d4" />
<path d="M2189.1 530.6 L2325.0 382.7 L2331.0 384.0 L2311.0 452.0 L2277.9 510.9 L2210.6 615.4 Z" fill="#d2d2d2" />
<path d="M2325.0 382.7 L2419.4 382.7 L2419.0 432.0 L2318.0 430.0 Z" fill="#dcdcdc" />
<path d="M2312.0 430.0 L2408.0 432.0 L2408.0 449.0 L2305.0 446.0 Z" fill="#c4af91" />
<path d="M2301.0 444.0 L2409.0 448.0 L2409.0 453.0 L2300.0 450.0 Z" fill="#efefef" />
<path d="M2305 445 L2306 423 L2385 425 L2384 448" fill="none" stroke="#2a2a2a" stroke-width="1.2"/>
<path d="M2343.0 412.0 L2352.0 412.0 L2353.0 423.0 L2342.0 423.0 Z" fill="#111" />
<path d="M2337 433 L2360 434 M2348 428 L2348 437" stroke="#111" stroke-width="1.3"/>
<path d="M2317.0 390.0 L2330.0 390.0 L2330.0 424.0 L2317.0 424.0 Z" fill="#f4f4f4" />
<path d="M2375.0 395.0 L2382.0 395.0 L2382.0 410.0 L2375.0 410.0 Z" fill="#f0eae4" stroke="#9a9a9a" stroke-width="0.6"/>
<path d="M2384.0 395.0 L2391.0 395.0 L2391.0 410.0 L2384.0 410.0 Z" fill="#f0eae4" stroke="#9a9a9a" stroke-width="0.6"/>
<path d="M2210.6 615.4 L2277.9 510.9 L2310.0 452.4 L2408.0 455.0 L2408.0 470.0 L2418.2 472.0 L2418.2 644.5 Z" fill="#c9b394" />
<path d="M2310.6 452.4 L2381.1 455.0 L2376.8 510.0 L2277.9 510.9 Z" fill="#343434" />
<path d="M2303.7 480.8 L2372.5 485.9 L2372.5 510.0 L2303.7 505.0 Z" fill="#404341" />
<path d="M2296.0 486.0 L2303.7 480.8 L2303.7 505.0 L2297.5 516.0 Z" fill="#393b3a" />
<path d="M2303.7 480.8 L2372.5 485.9 M2374 485 L2372 510" stroke="#262626" stroke-width="1.2" fill="none"/>
<path d="M2381.0 458.5 L2408.0 459.0 L2408.0 461.5 L2381.0 461.0 Z" fill="#ececec" />
<path d="M2381.0 468.0 L2408.0 468.5 L2408.0 471.0 L2381.0 470.5 Z" fill="#ececec" />
<path d="M2408.0 453.0 L2419.4 453.0 L2419.4 645.0 L2408.0 644.0 Z" fill="#cbcbcb" />
<path d="M2408.0 457.0 L2418.0 459.0 L2418.0 510.0 L2408.0 508.0 Z" fill="#5b5b5b" />
<path d="M2387.2 517.5 L2418.2 515.0 L2418.2 598.7 L2339.5 598.7 L2339.5 555.7 L2384.8 558.0 Z" fill="#9c9c9c" />
<path d="M2390.0 520.0 L2405.0 519.0 L2405.0 580.0 L2345.0 580.0 L2345.0 560.0 L2390.0 561.0 Z" fill="#a9a9a9" />
<path d="M2398 522 L2404 528 L2401 536 L2395 531 Z" fill="#4a8fb5"/>
<path d="M2383 568 L2390 566 L2392 572 L2385 575 Z" fill="#4a8fb5"/>
<path d="M2365 570 L2380 572 L2378 578 L2366 576 Z" fill="#8e7a72"/>
<path d="M2339.5 528.3 L2372.9 531.8 L2370.5 558.1 L2337.1 553.3 Z" fill="#0d0d0d" />
<circle cx="2403" cy="512" r="6" fill="#3a3030"/>
<rect x="2392" y="590" width="22" height="14" rx="3" fill="#2c2626"/>
<path d="M2394 604 L2390 617 M2412 604 L2415 617" stroke="#222" stroke-width="1"/>
<path d="M2226.2 525.6 L2252.2 491.4 L2256.3 516.7 L2233.0 531.0 Z" fill="#2e3034" />
<path d="M2230.0 524.0 L2250.5 496.0 L2253.8 515.5 L2234.0 528.0 Z" fill="#7d8486" />
<path d="M2210.6 615.4 L2418.2 644.5" stroke="#1a1a1a" stroke-width="1.6"/>
<path d="M2210.6 615.4 L2275 511" stroke="#2a2a2a" stroke-width="1.2"/>
<path d="M2200.2 533.4 L2214.6 619.3" stroke="#8a7b74" stroke-width="2" opacity="0.85"/>
<path d="M2203.9 535.2 L2212.1 613.6" stroke="#8a7b74" stroke-width="2" opacity="0.85"/>
<path d="M2207.7 532.5 L2222.9 609.4" stroke="#8a7b74" stroke-width="2" opacity="0.85"/>
<path d="M2210.1 528.5 L2222.5 614.9" stroke="#8a7b74" stroke-width="2" opacity="0.85"/>
<path d="M2212.6 528.2 L2222.9 619.0" stroke="#8a7b74" stroke-width="2" opacity="0.85"/>
<path d="M2217.5 527.6 L2231.9 609.7" stroke="#8a7b74" stroke-width="2" opacity="0.85"/>
<path d="M2220.6 527.3 L2228.6 618.5" stroke="#8a7b74" stroke-width="2" opacity="0.85"/>
<path d="M2223.2 528.2 L2239.1 618.5" stroke="#8a7b74" stroke-width="2" opacity="0.85"/>
<path d="M2226.8 535.6 L2239.1 616.1" stroke="#8a7b74" stroke-width="2" opacity="0.85"/>
<path d="M2230.0 535.4 L2243.5 619.6" stroke="#8a7b74" stroke-width="2" opacity="0.85"/>
<path d="M2234.8 529.0 L2245.7 610.0" stroke="#8a7b74" stroke-width="2" opacity="0.85"/>
<path d="M2236.7 526.7 L2247.1 615.2" stroke="#8a7b74" stroke-width="2" opacity="0.85"/>
<path d="M2239.8 532.8 L2250.5 611.7" stroke="#8a7b74" stroke-width="2" opacity="0.85"/>
<path d="M2244.8 530.8 L2255.4 613.8" stroke="#8a7b74" stroke-width="2" opacity="0.85"/>
<path d="M2248.0 526.6 L2263.8 608.3" stroke="#8a7b74" stroke-width="2" opacity="0.85"/>
<path d="M2251.5 534.4 L2259.6 617.5" stroke="#8a7b74" stroke-width="2" opacity="0.85"/>
<path d="M2304.7 539.8 L2303.8 618.6" stroke="#8a7b74" stroke-width="2" opacity="0.85"/>
<path d="M2308.0 543.6 L2307.7 627.1" stroke="#8a7b74" stroke-width="2" opacity="0.85"/>
<path d="M2313.1 543.4 L2313.4 622.3" stroke="#8a7b74" stroke-width="2" opacity="0.85"/>
<path d="M2315.8 541.8 L2315.3 627.0" stroke="#8a7b74" stroke-width="2" opacity="0.85"/>
<path d="M2320.0 542.6 L2319.1 629.3" stroke="#8a7b74" stroke-width="2" opacity="0.85"/>
<path d="M2322.2 537.4 L2323.6 629.0" stroke="#8a7b74" stroke-width="2" opacity="0.85"/>
<path d="M2326.3 543.2 L2327.5 621.7" stroke="#8a7b74" stroke-width="2" opacity="0.85"/>
<path d="M2329.8 535.8 L2329.1 619.8" stroke="#8a7b74" stroke-width="2" opacity="0.85"/>
<path d="M2334.2 544.0 L2333.8 618.6" stroke="#8a7b74" stroke-width="2" opacity="0.85"/>
<path d="M2338.4 539.3 L2339.0 620.8" stroke="#8a7b74" stroke-width="2" opacity="0.85"/>
<path d="M2341.2 542.3 L2342.0 623.1" stroke="#8a7b74" stroke-width="2" opacity="0.85"/>
<path d="M2343.7 543.2 L2342.8 623.9" stroke="#8a7b74" stroke-width="2" opacity="0.85"/>
<path d="M2348.9 535.3 L2350.8 629.4" stroke="#8a7b74" stroke-width="2" opacity="0.85"/>
<path d="M2352.1 541.9 L2351.5 623.2" stroke="#8a7b74" stroke-width="2" opacity="0.85"/>
<path d="M2272 540 L2287 622 M2280 540 L2292 622" stroke="#e8e8e8" stroke-width="1.2" opacity="0.8"/>
<path d="M2146 590.5 L2216 660.4 L2146 660.4 Z" fill="#454545"/>
<path d="M2146 590.5 L2216 660.4" stroke="#1c1c1c" stroke-width="3"/>
<path d="M2155 637.1 L2170.5 652.6 M2160.1 632 L2175.5 647.5 M2165.3 627 L2180.7 642.4" stroke="#a2a2a2" stroke-width="1.4" stroke-linecap="round"/>
</svg>
</body></html>
